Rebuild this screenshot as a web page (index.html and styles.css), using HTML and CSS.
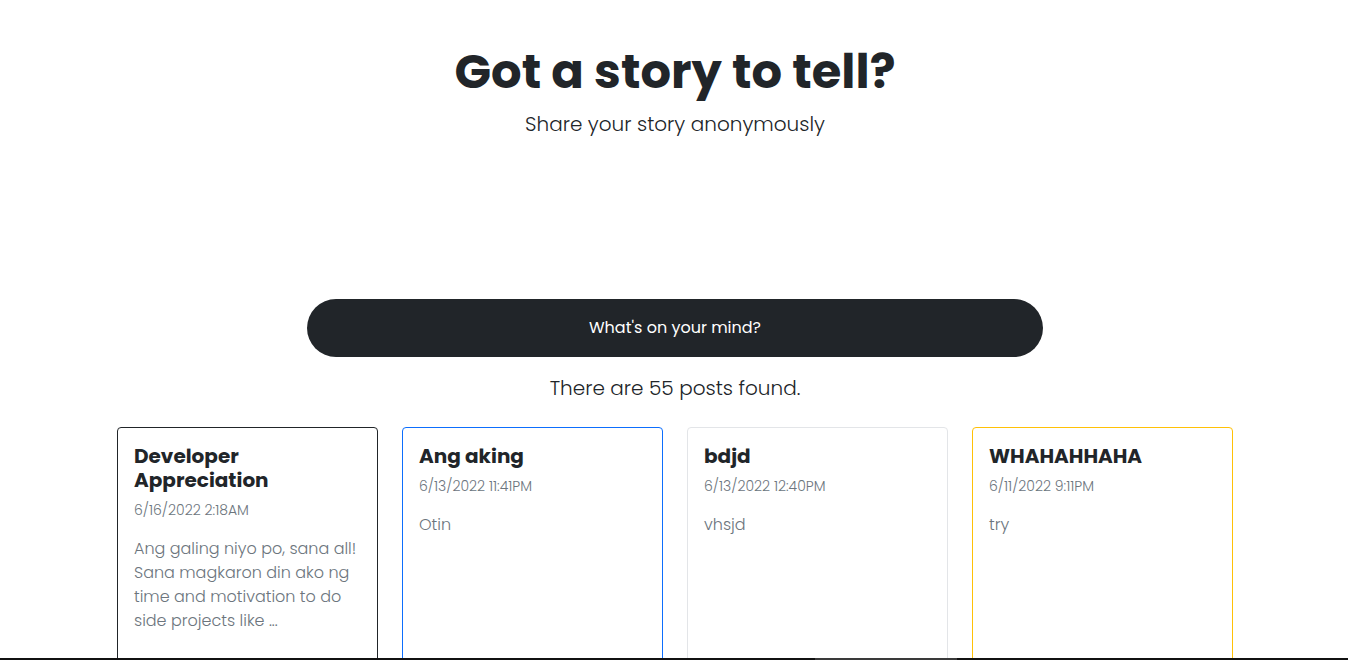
FILE: index.html
```html
<!DOCTYPE html>
<html lang="en">
<head>
<meta charset="utf-8">
<title>Got a story to tell?</title>
<link rel="stylesheet" href="styles.css">
</head>
<body>
<main class="container">
  <header class="hero">
    <h1 class="hero-title">Got a story to tell?</h1>
    <p class="hero-sub">Share your story anonymously</p>
  </header>
  <div class="compose">
    <button class="compose-btn" type="button">What's on your mind?</button>
  </div>
  <p class="count">There are 55 posts found.</p>
  <section class="posts">
    <article class="card card-dark">
      <h5 class="card-title">Developer Appreciation</h5>
      <p class="card-date">6/16/2022 2:18AM</p>
      <p class="card-text">Ang galing niyo po, sana all! Sana magkaron din ako ng time and motivation to do side projects like ...</p>
    </article>
    <article class="card card-primary">
      <h5 class="card-title">Ang aking</h5>
      <p class="card-date">6/13/2022 11:41PM</p>
      <p class="card-text">Otin</p>
    </article>
    <article class="card card-light">
      <h5 class="card-title">bdjd</h5>
      <p class="card-date">6/13/2022 12:40PM</p>
      <p class="card-text">vhsjd</p>
    </article>
    <article class="card card-warning">
      <h5 class="card-title">WHAHAHHAHA</h5>
      <p class="card-date">6/11/2022 9:11PM</p>
      <p class="card-text">try</p>
    </article>
  </section>
</main>
<div class="scrollbar"><div class="scrollbar-thumb"></div></div>
</body>
</html>
```

FILE: styles.css
```css
* { box-sizing: border-box; }

body {
  margin: 0;
  font-family: "Poppins", "Inter", "Open Sans", sans-serif;
  color: #212529;
  background: #fff;
  font-size: 16px;
  line-height: 1.5;
}

.container {
  width: 1140px;
  margin: 0 auto;
  padding: 0 11px 0 13px;
}

.hero {
  text-align: center;
  padding-top: 43px;
}

.hero-title {
  margin: 0;
  font-size: 48px;
  font-weight: 700;
  line-height: 1.2;
}

.hero-sub {
  margin: 8px 0 0;
  font-size: 20px;
  font-weight: 300;
  line-height: 30px;
}

.compose {
  display: flex;
  justify-content: center;
  margin-top: 160px;
}

.compose-btn {
  width: 736px;
  height: 58px;
  border: none;
  border-radius: 29px;
  background: #212529;
  color: #fff;
  font-family: inherit;
  font-size: 16px;
  font-weight: 400;
}

.count {
  margin: 16px 0 0;
  text-align: center;
  font-size: 20px;
  font-weight: 300;
  line-height: 30px;
}

.posts {
  display: grid;
  grid-template-columns: repeat(4, 1fr);
  gap: 24px;
  margin-top: 24px;
}

.card {
  height: 300px;
  border: 1px solid #dee2e6;
  border-radius: 4px;
  padding: 16px 16px;
}

.card-dark { border-color: #212529; }
.card-primary { border-color: #0d6efd; }
.card-light { border-color: #e3e5e8; }
.card-warning { border-color: #ffc107; }

.card-title {
  margin: 0 0 8px;
  font-size: 20px;
  font-weight: 700;
  line-height: 24px;
}

.card-date {
  margin: 0 0 16px;
  font-size: 14px;
  font-weight: 300;
  color: #6c757d;
  line-height: 21px;
}

.card-text {
  margin: 0;
  font-size: 16px;
  font-weight: 300;
  line-height: 24px;
  color: #6c757d;
}

.scrollbar {
  position: fixed;
  left: 0;
  right: 0;
  bottom: 0;
  height: 2px;
  background: #111;
}

.scrollbar-thumb {
  position: absolute;
  left: 815px;
  width: 142px;
  top: 0;
  bottom: 0;
  background: #3a3a3a;
}
```
